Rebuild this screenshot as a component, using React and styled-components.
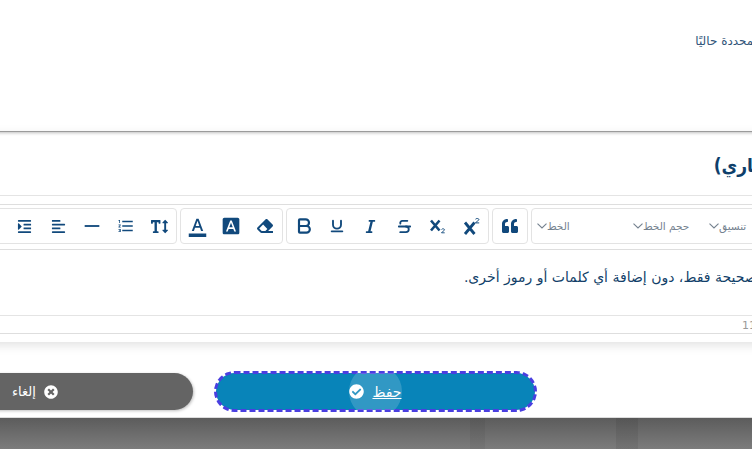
import React from "react";
import styled, { createGlobalStyle } from "styled-components";
import { Bold, Underline, Strikethrough } from "lucide-react";
import {
  MdFormatIndentDecrease,
  MdHorizontalRule,
  MdFormatListNumbered,
  MdFormatColorText,
  MdFontDownload,
} from "react-icons/md";
import {
  FaEraser,
  FaQuoteLeft,
  FaCheckCircle,
  FaTimesCircle,
  FaItalic,
  FaAlignLeft,
  FaTextHeight,
  FaIndent,
} from "react-icons/fa";

const Global = createGlobalStyle`
  html, body {
    margin: 0;
    height: 449px;
    overflow: hidden;
    background: #fff;
    font-family: "DejaVu Sans", "Noto Sans", sans-serif;
  }
`;

const Page = styled.div`
  width: 1000px;
  margin-left: -40px;
  color: #0f3f6b;
`;

const TopPanel = styled.div`
  height: 132px;
  box-sizing: border-box;
  padding: 33px 153px 0 0;
  border-bottom: 1px solid #a0a0a0;
  box-shadow: 0 1px 3px rgba(0, 0, 0, 0.25);
  font-size: 12px;
  line-height: 16px;
  color: #2f5479;
  direction: rtl;
`;

const Card = styled.section`
  height: 210px;
  box-shadow: 0 3px 10px rgba(0, 0, 0, 0.12);
  position: relative;
`;

const Heading = styled.h2`
  margin: 0;
  height: 64px;
  box-sizing: border-box;
  padding: 19px 65px 0 0;
  border-bottom: 1px solid #e4e4e4;
  font-family: "DejaVu Sans Condensed", "DejaVu Sans", sans-serif;
  font-size: 19px;
  line-height: 28px;
  font-weight: 600;
  direction: rtl;
  color: #0f3f6b;
`;

const Editor = styled.div`
  margin-top: 8px;
  border-top: 1px solid #dedede;
`;

const Toolbar = styled.div`
  display: flex;
  gap: 3px;
  height: 36px;
  padding: 3px 0 5px 13.4px;
  border-bottom: 1px solid #dedede;
`;

const Group = styled.div`
  display: flex;
  align-items: center;
  box-sizing: content-box;
  border: 1px solid #e3e3e3;
  border-radius: 4px;
`;

const ToolButton = styled.span`
  width: 33.6px;
  height: 100%;
  display: flex;
  align-items: center;
  justify-content: center;
  color: #11497c;
`;

const Selects = styled(Group)`
  width: 480px;
`;

const Select = styled.div`
  width: ${(p) => p.$w}px;
  display: flex;
  align-items: center;
  padding-left: 5px;
  box-sizing: border-box;
  color: #75828f;
  font-size: 10.5px;
`;

const Content = styled.div`
  height: 65px;
  box-sizing: border-box;
  padding: 17px 195px 0 0;
  font-size: 14px;
  line-height: 20px;
  white-space: nowrap;
  direction: rtl;
  color: #123f69;
`;

const Counter = styled.div`
  height: 19px;
  box-sizing: border-box;
  padding: 3px 0 0 782px;
  border-top: 1px solid #e4e4e4;
  border-bottom: 1px solid #dedede;
  font-size: 11px;
  line-height: 14px;
  color: #9a9a9a;
`;

const Footer = styled.div`
  height: 76px;
  box-sizing: border-box;
  padding: 31px 0 0 0;
  display: flex;
  gap: 23px;
  border-bottom: 1px solid #dcdcdc;
`;

const Button = styled.button`
  position: relative;
  overflow: hidden;
  height: 37px;
  border: 0;
  border-radius: 19px;
  box-sizing: border-box;
  display: flex;
  align-items: center;
  gap: 8px;
  color: #fff;
  font-family: inherit;
  font-size: 13px;
  padding: 0;
`;

const Cancel = styled(Button)`
  width: 233px;
  background: #646464;
  padding-left: 52px;
  box-shadow: 1px 1px 3px rgba(0, 0, 0, 0.25);
`;

const Save = styled(Button)`
  width: 319px;
  justify-content: center;
  background: #0884b9;
  outline: 3px dashed #4a3fe0;
  outline-offset: -1px;
  font-size: 14px;
`;

const Ripple = styled.span`
  position: absolute;
  left: 133px;
  top: -8px;
  width: 53px;
  height: 53px;
  background: rgba(255, 255, 255, 0.17);
  border-radius: 50%;
`;

const Label = styled.span`
  position: relative;
  text-decoration: ${(p) => (p.$under ? "underline" : "none")};
`;

const SaveIcon = styled(FaCheckCircle)`
  position: relative;
`;

const Backdrop = styled.div`
  height: 31px;
  background:
    linear-gradient(90deg, transparent 510px, rgba(0, 0, 0, 0.05) 510px, rgba(0, 0, 0, 0.05) 525px, transparent 525px, transparent 656px, rgba(0, 0, 0, 0.07) 656px, rgba(0, 0, 0, 0.07) 678px, transparent 678px),
    linear-gradient(#5c5c5c, #7c7c7c);
`;

const Chevron = () => (
  <svg width="10" height="6" viewBox="0 0 10 6" fill="none" stroke="currentColor" strokeWidth="1.1">
    <path d="M0.5 0.7 5 5 9.5 0.7" />
  </svg>
);

const HeavyBold = ({ size }) => <Bold size={size} strokeWidth={2.6} />;
const HeavyUnderline = ({ size }) => <Underline size={size} strokeWidth={2.8} />;
const HeavyStrike = ({ size }) => <Strikethrough size={size} strokeWidth={2.6} />;

const SubscriptIcon = () => (
  <svg width="17" height="17" viewBox="0 0 17 17" fill="none" stroke="currentColor">
    <path d="M2 2.5 10.5 12.5M10.5 2.5 2 12.5" strokeWidth="2.6" />
    <path d="M12.5 11.5c.5-1 3-1 3 .3 0 1-2.2 1.6-3 3h3.2" strokeWidth="0.9" />
  </svg>
);

const SuperscriptIcon = () => (
  <svg width="18" height="18" viewBox="0 0 18 18" fill="none" stroke="currentColor">
    <path d="M2 5.5 11.5 17M11.5 5.5 2 17" strokeWidth="2.8" />
    <path d="M12.5 2.2c.5-1 3.4-1 3.4.4 0 1.1-2.6 1.7-3.4 3.3h3.7" strokeWidth="1" />
  </svg>
);

const tools = [
  [
    [MdFormatIndentDecrease, 18],
    [FaIndent, 15],
    [FaAlignLeft, 15],
    [MdHorizontalRule, 22],
    [MdFormatListNumbered, 18],
    [FaTextHeight, 17],
  ],
  [
    [MdFormatColorText, 21],
    [MdFontDownload, 20],
    [FaEraser, 16],
  ],
  [
    [HeavyBold, 20],
    [HeavyUnderline, 16],
    [FaItalic, 15],
    [HeavyStrike, 17],
    [SubscriptIcon, 17],
    [SuperscriptIcon, 18],
  ],
  [[FaQuoteLeft, 16]],
];

export default function App() {
  return (
    <Page>
      <Global />
      <TopPanel>الخيارات المحددة حاليًا</TopPanel>
      <Card>
        <Heading>نص الوصف (اختياري)</Heading>
        <Editor>
          <Toolbar>
            {tools.map((group, i) => (
              <Group key={i}>
                {group.map(([Icon, size], j) => (
                  <ToolButton key={j}>
                    <Icon size={size} />
                  </ToolButton>
                ))}
              </Group>
            ))}
            <Selects>
              <Select $w={96}>
                <Chevron />
                <span dir="rtl">الخط</span>
              </Select>
              <Select $w={76}>
                <Chevron />
                <span dir="rtl">حجم الخط</span>
              </Select>
              <Select $w={100}>
                <Chevron />
                <span dir="rtl">تنسيق</span>
              </Select>
            </Selects>
          </Toolbar>
          <Content>الصحيحة فقط، دون إضافة أي كلمات أو رموز أخرى.</Content>
          <Counter>11</Counter>
        </Editor>
      </Card>
      <Footer>
        <Cancel>
          <Label>إلغاء</Label>
          <FaTimesCircle size={14} />
        </Cancel>
        <Save>
          <Ripple />
          <SaveIcon size={15} />
          <Label $under>حفظ</Label>
        </Save>
      </Footer>
      <Backdrop />
    </Page>
  );
}
